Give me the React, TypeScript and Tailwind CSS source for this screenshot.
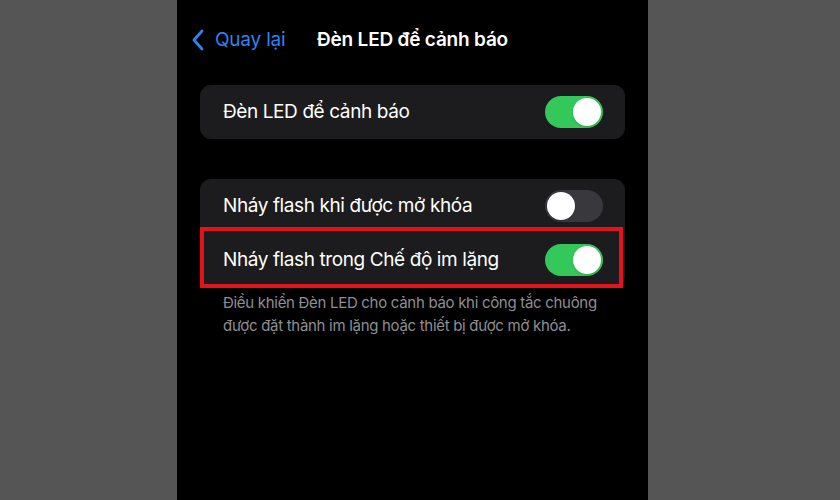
import React from "react";

function Toggle({ on }: { on: boolean }) {
  return (
    <div
      className={`relative w-[58px] h-[32px] rounded-full ${on ? "bg-[#34c759]" : "bg-[#39393d]"}`}
    >
      <div
        className={`absolute top-[2px] w-[28px] h-[28px] rounded-full bg-white shadow ${on ? "left-[28px]" : "left-[2px]"}`}
      />
    </div>
  );
}

export default function App() {
  return (
    <div
      className="w-[840px] h-[500px] bg-[#555555] pl-[177px] overflow-hidden"
      style={{ fontFamily: "Inter, 'Noto Sans', sans-serif" }}
    >
      <div className="w-[471px] h-full bg-black px-[23px] flex flex-col">
        <div className="relative h-[40px] mt-[20px] flex items-center">
          <div className="flex items-center text-[#2f83f0] -ml-[9px]">
            <svg width="14" height="22" viewBox="0 0 14 22" fill="none">
              <path d="M11 2 L3 11 L11 20" stroke="#2f83f0" strokeWidth="2.8" strokeLinecap="round" strokeLinejoin="round" />
            </svg>
            <span className="ml-[10px] text-[19px] tracking-[-0.2px]">Quay lại</span>
          </div>
          <div className="absolute inset-0 flex items-center justify-center text-white text-[19px] font-semibold tracking-[-0.2px]">
            Đèn LED để cảnh báo
          </div>
        </div>

        <div className="mt-[25px] h-[54px] rounded-[11px] bg-[#1c1c1e] flex items-center justify-between pl-[23px] pr-[22px]">
          <span className="text-white text-[19px] tracking-[-0.4px]">Đèn LED để cảnh báo</span>
          <Toggle on />
        </div>

        <div className="mt-[40px] rounded-[11px] bg-[#1c1c1e] relative">
          <div className="h-[54px] flex items-center justify-between pl-[23px] pr-[22px]">
            <span className="text-white text-[19px] tracking-[-0.4px]">Nháy flash khi được mở khóa</span>
            <Toggle on={false} />
          </div>
          <div className="h-[54px] flex items-center justify-between pl-[23px] pr-[22px] relative">
            <span className="text-white text-[19px] tracking-[-0.4px]">Nháy flash trong Chế độ im lặng</span>
            <Toggle on />
            <div className="absolute left-0 right-[2px] top-[-6px] bottom-[-1px] border-[4px] border-[#e3131b]" />
          </div>
        </div>

        <div className="mt-[4px] pl-[23px] pr-[10px] text-[15px] leading-[23px] tracking-[-0.3px] text-[#8e8e93]">
          Điều khiển Đèn LED cho cảnh báo khi công tắc chuông được đặt thành im lặng hoặc thiết bị được mở khóa.
        </div>
      </div>
    </div>
  );
}
